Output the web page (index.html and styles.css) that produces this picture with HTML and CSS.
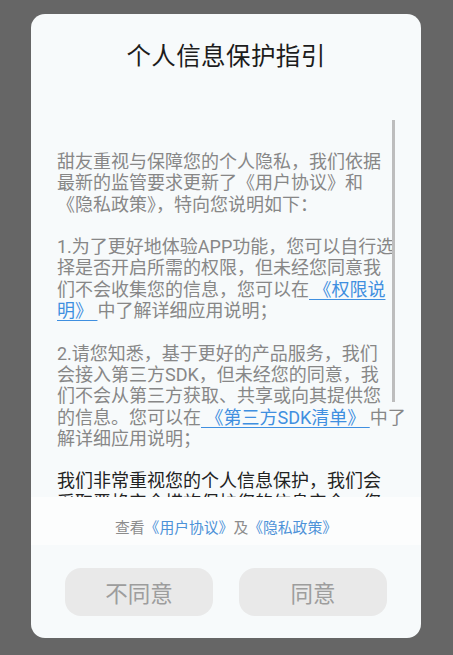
FILE: index.html
```html
<!DOCTYPE html>
<html lang="zh-CN">
<head>
<meta charset="utf-8">
<title>个人信息保护指引</title>
<link rel="stylesheet" href="styles.css">
</head>
<body>
<div class="dialog">
  <div class="header">个人信息保护指引</div>
  <div class="scroll">
    <div class="content">
      <p class="para">
        <span class="line">甜友重视与保障您的个人隐私，我们依据</span>
        <span class="line">最新的监管要求更新了《用户协议》和</span>
        <span class="line">《隐私政策》，特向您说明如下：</span>
      </p>
      <p class="para">
        <span class="line">1.为了更好地体验APP功能，您可以自行选</span>
        <span class="line">择是否开启所需的权限，但未经您同意我</span>
        <span class="line">们不会收集您的信息，您可以在<a class="link"> 《权限说</a></span>
        <span class="line"><a class="link">明》 </a>中了解详细应用说明；</span>
      </p>
      <p class="para">
        <span class="line">2.请您知悉，基于更好的产品服务，我们</span>
        <span class="line">会接入第三方SDK，但未经您的同意，我</span>
        <span class="line">们不会从第三方获取、共享或向其提供您</span>
        <span class="line">的信息。您可以在<a class="link"> 《第三方SDK清单》 </a>中了</span>
        <span class="line">解详细应用说明；</span>
      </p>
      <p class="para dark">
        <span class="line">我们非常重视您的个人信息保护，我们会</span>
        <span class="line">采取严格安全措施保护您的信息安全。您</span>
        <span class="line">可以随时查阅完整协议内容。</span>
      </p>
    </div>
    <div class="thumb"></div>
  </div>
  <div class="agree-links">查看<span class="blue">《用户协议》</span>及<span class="blue">《隐私政策》</span></div>
  <div class="actions">
    <button class="btn">不同意</button>
    <button class="btn">同意</button>
  </div>
</div>
</body>
</html>
```

FILE: styles.css
```css
html, body {
  margin: 0;
  padding: 0;
}
body {
  background: #666666;
  width: 453px;
  height: 655px;
  overflow: hidden;
  font-family: "Roboto", "Noto Sans CJK SC", sans-serif;
}
.dialog {
  margin: 14px 0 0 31px;
  width: 390px;
  height: 624px;
  background: #f7fafb;
  border-radius: 14px;
  display: flex;
  flex-direction: column;
  overflow: hidden;
}
.header {
  height: 106px;
  box-sizing: border-box;
  padding-top: 28px;
  line-height: 30px;
  font-size: 24.5px;
  color: #1c1c1c;
  text-align: center;
  letter-spacing: 0.4px;
}
.scroll {
  position: relative;
  height: 377px;
  overflow: hidden;
  flex: none;
}
.content {
  padding: 31px 0 0 26px;
  font-size: 18px;
  line-height: 21.3px;
  color: #878787;
}
.para {
  margin: 0 0 21.3px 0;
}
.line {
  display: block;
  white-space: pre;
}
.link {
  color: #3f8fe0;
  text-decoration: underline;
  text-underline-offset: 3px;
}
.dark {
  color: #222222;
}
.thumb {
  position: absolute;
  left: 361px;
  top: 0;
  width: 3px;
  height: 282px;
  background: #bdbdbd;
}
.agree-links {
  height: 48px;
  box-sizing: border-box;
  padding-top: 19px;
  line-height: 24px;
  font-size: 14.8px;
  text-align: center;
  color: #8c8c8c;
  background: #fcfdfd;
  flex: none;
}
.blue {
  color: #4d92d8;
}
.actions {
  margin-top: 23px;
  display: flex;
  justify-content: center;
  gap: 26px;
}
.btn {
  width: 148px;
  height: 48px;
  border: none;
  border-radius: 16px;
  background: #e9e9e9;
  color: #9d9d9d;
  font-family: "Roboto", "Noto Sans CJK SC", sans-serif;
  font-size: 22.5px;
  padding: 0;
}
```
